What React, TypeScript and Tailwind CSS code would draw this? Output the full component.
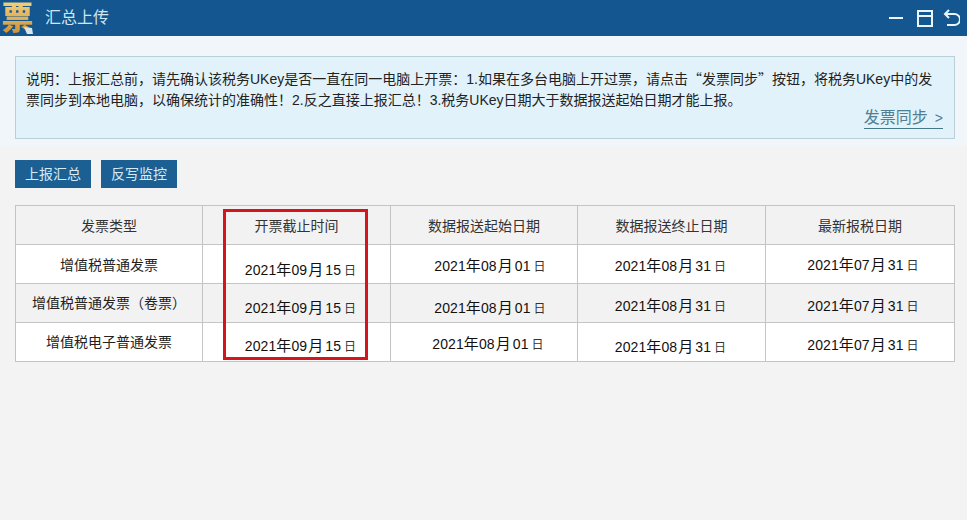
import React from "react";

const font = "font-['Liberation_Sans','Noto_Sans_CJK_SC',sans-serif]";

function DateText({ y, m, d }: { y: string; m: string; d: string }) {
  return (
    <span className="inline-flex items-baseline whitespace-nowrap text-[#111] text-[14px] tracking-[0.1px]">
      <span>{y}</span>
      <span className="text-[15px]">年</span>
      <span>{m}</span>
      <span className="ml-[1px] text-[15px]">月</span>
      <span className="ml-[2px]">{d}</span>
      <span className="ml-[3px] text-[12px] text-[#333]">日</span>
    </span>
  );
}

const cell = "flex items-center justify-center border-l border-[#c4c4c4] first:border-l-0";

const rows = [
  {
    bg: "bg-white",
    name: "增值税普通发票",
    nameClass: "pt-[2px]",
    cells: [
      { m: "09", d: "15", c: "pl-[8px] pt-[13px]", y: "2021" },
      { m: "08", d: "01", c: "pl-[12px] pt-[4px]", y: "2021" },
      { m: "08", d: "31", c: "pr-[2px] pt-[4px]", y: "2021" },
      { m: "07", d: "31", c: "pl-[6px] pt-[2px]", y: "2021" },
    ],
  },
  {
    bg: "bg-[#f2f2f2]",
    name: "增值税普通发票（卷票）",
    nameClass: "pt-[1px]",
    cells: [
      { m: "09", d: "15", c: "pl-[8px] pt-[10px]", y: "2021" },
      { m: "08", d: "01", c: "pl-[12px] pt-[10px]", y: "2021" },
      { m: "08", d: "31", c: "pr-[2px] pt-[6px]", y: "2021" },
      { m: "07", d: "31", c: "pl-[6px] pt-[6px]", y: "2021" },
    ],
  },
  {
    bg: "bg-white",
    name: "增值税电子普通发票",
    nameClass: "",
    cells: [
      { m: "09", d: "15", c: "pl-[8px] pt-[8px]", y: "2021" },
      { m: "08", d: "01", c: "pl-[8px] pt-[4px]", y: "2021" },
      { m: "08", d: "31", c: "pr-[2px] pt-[10px]", y: "2021" },
      { m: "07", d: "31", c: "pl-[6px] pt-[6px]", y: "2021" },
    ],
  },
];

const headers = ["发票类型", "开票截止时间", "数据报送起始日期", "数据报送终止日期", "最新报税日期"];
const cols = "grid-cols-[186px_188px_187px_188px_1fr]";

export default function App() {
  return (
    <div className={`${font} relative w-[967px] h-[520px] overflow-hidden bg-[#f3f3f3] text-[14px]`}>
      <header className="flex h-[36px] items-center bg-[#14568f]">
        <span className="relative ml-[1px] w-[33px] text-center">
          <span className="bg-gradient-to-b from-[#f7d47c] to-[#c98c2c] bg-clip-text text-[32px] leading-[36px] font-black text-transparent">
            票
          </span>
          <svg className="absolute left-[22px] top-[27px]" width="10" height="7" viewBox="0 0 10 7">
            <path d="M1 0 9 1 10 7H4Z" fill="#d9e4ea" />
          </svg>
        </span>
        <span className="ml-[11px] text-[16px] text-[#cfe7f4]">汇总上传</span>
        <div className="ml-auto mr-[7px] flex items-center text-[#e8f4fa]">
          <svg width="14" height="20" viewBox="0 0 14 20" fill="none" stroke="currentColor" strokeWidth="2">
            <path d="M0 10h14" />
          </svg>
          <svg className="ml-[14px]" width="16" height="17" viewBox="0 0 16 17" fill="none" stroke="currentColor" strokeWidth="2">
            <path d="M1 1h14v15H1zM1 6h14" />
          </svg>
          <svg className="ml-[10px]" width="17" height="18" viewBox="0 0 17 18" fill="none" stroke="currentColor" strokeWidth="2">
            <path d="M6 1 2 5l4 4M2 5h9.5a5 5 0 0 1 0 11H4" />
          </svg>
        </div>
      </header>

      <div className="h-[110px] bg-[#f0f6fa] pl-[15px] pr-[12px] pt-[20px]">
        <section className="h-[83px] border border-[#b9d0da] bg-[#e2f2fa] pl-[10px] pr-[8px] pt-[11px]">
          <p className="text-[14px] leading-[21px] text-[#222]">
            说明：上报汇总前，请先确认该税务UKey是否一直在同一电脑上开票：1.如果在多台电脑上开过票，请点击
            <span className="font-['Noto_Sans_CJK_SC',sans-serif]">“</span>发票同步
            <span className="font-['Noto_Sans_CJK_SC',sans-serif]">”</span>按钮，将税务UKey中的发
            <br />
            票同步到本地电脑，以确保统计的准确性！2.反之直接上报汇总！3.税务UKey日期大于数据报送起始日期才能上报。
          </p>
          <div className="mt-[-3px] flex justify-end pr-[3px]">
            <span className="border-b border-[#44788c] text-[16px] leading-[19px] text-[#4f7f92]">
              发票同步<span className="ml-[7px] text-[14px]">&gt;</span>
            </span>
          </div>
        </section>
      </div>

      <main className="pl-[15px] pr-[12px]">
        <div className="mt-[14px] flex gap-[10px]">
          <button className="h-[28px] w-[76px] bg-[#1c5f92] text-[14px] text-[#d5ecf8]">上报汇总</button>
          <button className="h-[28px] w-[76px] bg-[#1c5f92] text-[14px] text-[#d5ecf8]">反写监控</button>
        </div>

        <section className="mt-[17px] w-[940px] border border-[#c4c4c4]">
          <div className={`grid h-[38px] ${cols} bg-[#f2f2f2] text-[#333]`}>
            {headers.map((h) => (
              <div key={h} className={`${cell} pt-[2px]`}>
                {h}
              </div>
            ))}
          </div>
          {rows.map((r) => (
            <div key={r.name} className={`grid h-[39px] ${cols} border-t border-[#c4c4c4] ${r.bg}`}>
              <div className={`${cell} text-[#222] ${r.nameClass}`}>{r.name}</div>
              {r.cells.map((c, i) => (
                <div key={i} className={`${cell} ${c.c}`}>
                  <DateText y={c.y} m={c.m} d={c.d} />
                </div>
              ))}
            </div>
          ))}
        </section>
      </main>

      <div className="absolute left-[223px] top-[209px] h-[151px] w-[145px] border-[3px] border-[#d4161c]" />
    </div>
  );
}
